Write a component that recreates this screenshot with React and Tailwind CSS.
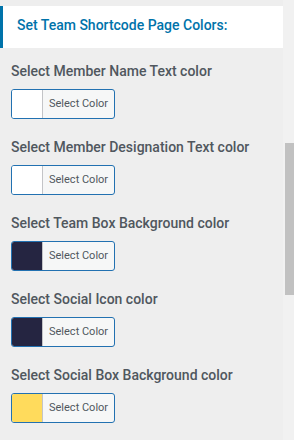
import React from 'react';

const items = [
  { label: 'Select Member Name Text color', swatch: 'bg-white' },
  { label: 'Select Member Designation Text color', swatch: 'bg-white' },
  { label: 'Select Team Box Background color', swatch: 'bg-[#252541]' },
  { label: 'Select Social Icon color', swatch: 'bg-[#252541]' },
  { label: 'Select Social Box Background color', swatch: 'bg-[#ffdb5c]' },
];

const ColorButton = ({ swatch }) => (
  <button className="flex h-[30px] w-[104px] overflow-hidden rounded-[3px] border border-[#2271b1] bg-[#f6f7f7]">
    <span className={`h-full w-[31px] border-r border-[#c3c4c7] ${swatch}`} />
    <span className="flex h-full flex-1 items-center pl-[6px] text-[11px] text-[#50575e]">
      Select Color
    </span>
  </button>
);

const App = () => {
  return (
    <div className="flex h-[440px] w-[294px] overflow-hidden bg-[#eeeeee] font-['Roboto',sans-serif]">
      {/* Settings panel */}
      <div className="w-[283px]">
        <div className="mt-[6px] flex h-[42px] items-center border-l-[3px] border-[#0073aa] bg-white pb-[3px] pl-[14px]">
          <h2 className="text-[14px] font-medium text-[#0073aa]">Set Team Shortcode Page Colors:</h2>
        </div>

        <div className="pl-[11px] pt-[13px]">
          {items.map((item) => (
            <div key={item.label} className="mb-[18px]">
              <p className="mb-[8px] h-[20px] text-[14px] font-medium leading-[20px] text-[#50575e]">
                {item.label}
              </p>
              <ColorButton swatch={item.swatch} />
            </div>
          ))}
        </div>
      </div>

      {/* Scrollbar */}
      <div className="flex w-[11px] flex-col bg-[#f1f1f1] pl-[2px]">
        <div className="mt-[143px] h-[152px] bg-[#c1c1c1]" />
      </div>
    </div>
  );
};

export default App;
